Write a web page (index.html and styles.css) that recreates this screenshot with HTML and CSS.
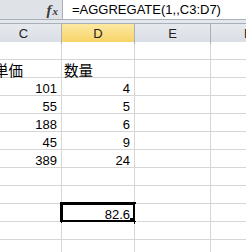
FILE: index.html
```html
<!DOCTYPE html>
<html lang="ja">
<head>
<meta charset="utf-8">
<link rel="stylesheet" href="styles.css">
</head>
<body>
<div class="app">
  <div class="fbar">
    <div class="fx-area"><span class="fx"><i>f</i><i class="x">x</i></span></div>
    <div class="finput">=AGGREGATE(1,,C3:D7)</div>
  </div>
  <div class="gap"></div>
  <div class="viewport">
    <div class="sheet">
      <div class="hdr">C</div><div class="hdr sel">D</div><div class="hdr">E</div><div class="hdr">F</div>

      <div class="c"></div><div class="c"></div><div class="c"></div><div class="c"></div>
      <div class="c jp ind">単価</div><div class="c jp">数量</div><div class="c"></div><div class="c"></div>
      <div class="c num">101</div><div class="c num">4</div><div class="c"></div><div class="c"></div>
      <div class="c num">55</div><div class="c num">5</div><div class="c"></div><div class="c"></div>
      <div class="c num">188</div><div class="c num">6</div><div class="c"></div><div class="c"></div>
      <div class="c num">45</div><div class="c num">9</div><div class="c"></div><div class="c"></div>
      <div class="c num">389</div><div class="c num">24</div><div class="c"></div><div class="c"></div>
      <div class="c"></div><div class="c"></div><div class="c"></div><div class="c"></div>
      <div class="c"></div><div class="c"></div><div class="c"></div><div class="c"></div>
      <div class="c"></div><div class="c num active">82.6<span class="handle"></span></div><div class="c"></div><div class="c"></div>
      <div class="c"></div><div class="c"></div><div class="c"></div><div class="c"></div>
      <div class="c"></div><div class="c"></div><div class="c"></div><div class="c"></div>
    </div>
  </div>
</div>
</body>
</html>
```
FILE: styles.css
```css
html, body {
  margin: 0;
  padding: 0;
  background: #fff;
}
.app {
  width: 246px;
  height: 252px;
  overflow: hidden;
  font-family: "Liberation Sans", "Noto Sans CJK JP", sans-serif;
  color: #000;
}
.fbar {
  display: flex;
  height: 19px;
  background: #dfe3e8;
  border-bottom: 1px solid #a9b0b9;
}
.fx-area {
  width: 62px;
  display: flex;
  justify-content: flex-end;
  align-items: center;
  padding-right: 4px;
  box-sizing: border-box;
}
.fx {
  font-family: "Liberation Serif", serif;
  font-weight: bold;
  font-size: 15px;
  color: #3a3a3a;
  line-height: 1;
  margin-top: 1px;
}
.fx .x {
  font-size: 11px;
  margin-left: 1px;
}
.finput {
  flex: 1;
  background: #fff;
  border-left: 1px solid #a9b0b9;
  font-size: 13px;
  line-height: 19px;
  padding-left: 9px;
  white-space: nowrap;
}
.gap {
  height: 3px;
  background: #e4e7ec;
}
.viewport {
  overflow: hidden;
  width: 246px;
}
.sheet {
  display: grid;
  width: max-content;
  margin-left: -14px;
  grid-template-columns: 75px 72px 75px 74px;
  grid-auto-rows: 17px;
  column-gap: 1px;
  row-gap: 1px;
  background: #d6d6d6;
  border-top: 1px solid #a9b0b9;
}
.hdr {
  height: 19px;
  background: linear-gradient(#e6e9ee, #dadee4);
  border-bottom: 1px solid #9ea6b0;
  display: flex;
  align-items: center;
  justify-content: center;
  font-size: 13px;
  color: #222;
  box-shadow: 1px 0 0 #a9b0b9;
}
.hdr.sel {
  background: linear-gradient(#fde9a3, #f7d264);
  border-bottom-color: #e9b54a;
}
.c {
  background: #fff;
  display: flex;
  align-items: flex-end;
  font-size: 13px;
  line-height: 13px;
  padding: 0 4px 0 2px;
  white-space: nowrap;
  position: relative;
}
.num {
  justify-content: flex-end;
}
.jp {
  font-family: "Noto Sans CJK JP", sans-serif;
  font-size: 14.5px;
  line-height: 15px;
  padding-bottom: 0;
  padding-left: 2px;
}
.ind {
  padding-left: 8px;
}
.active::before {
  content: "";
  position: absolute;
  left: -2px;
  top: -2px;
  right: -2px;
  bottom: -2px;
  border: 3px solid #000;
}
.handle {
  position: absolute;
  right: -3px;
  bottom: -4px;
  width: 6px;
  height: 6px;
  background: #000;
  border: 1px solid #fff;
  border-top: 0;
  border-left: 0;
}
```
